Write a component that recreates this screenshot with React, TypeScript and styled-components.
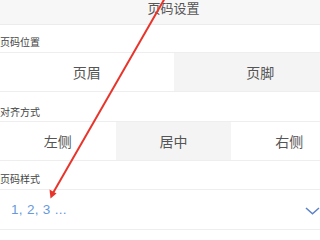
import React from "react";
import styled, { createGlobalStyle } from "styled-components";

const Global = createGlobalStyle`
  html, body { margin: 0; padding: 0; background: #fff; overflow: hidden; }
  body { font-family: "Noto Sans CJK SC", "Noto Sans", sans-serif; }
`;

const Page = styled.div`
  position: relative;
  width: 347px;
  height: 240px;
  background: #fff;
`;

const Header = styled.div`
  height: 25px;
  box-sizing: border-box;
  background: #f7f7f7;
  border-bottom: 1px solid #ececec;
  display: flex;
  justify-content: center;
  align-items: flex-start;
  padding-top: 1px;
  font-size: 13px;
  line-height: 13px;
  color: #555;
`;

const Label = styled.div<{ $h: number; $pb: number }>`
  height: ${(p) => p.$h}px;
  box-sizing: border-box;
  display: flex;
  align-items: flex-end;
  padding-bottom: ${(p) => p.$pb}px;
  font-size: 10px;
  line-height: 11px;
  color: #444;
`;

const OptionRow = styled.div<{ $cols: number }>`
  display: grid;
  grid-template-columns: repeat(${(p) => p.$cols}, 1fr);
  height: 40px;
  box-sizing: border-box;
  border-top: 1px solid #eeeeee;
  border-bottom: 1px solid #eeeeee;
`;

const Option = styled.div<{ $gray?: boolean }>`
  display: flex;
  align-items: center;
  justify-content: center;
  background: ${(p) => (p.$gray ? "#f4f4f4" : "#fff")};
  font-size: 14px;
  color: #555;
`;

const SelectRow = styled.div`
  height: 41px;
  box-sizing: border-box;
  border-top: 1px solid #eeeeee;
  border-bottom: 1px solid #eeeeee;
  display: flex;
  align-items: center;
  justify-content: space-between;
  padding: 0 27px 0 11px;
`;

const SelectValue = styled.span`
  font-family: "Liberation Sans", "Noto Sans", sans-serif;
  font-size: 13.5px;
  color: #6899dc;
  letter-spacing: 0.3px;
`;

const Chevron = styled.svg`
  display: block;
  margin-top: 2px;
`;

const Arrow = styled.svg`
  position: absolute;
  left: 0;
  top: 0;
  pointer-events: none;
`;

export default function App() {
  return (
    <>
      <Global />
      <Page>
        <Header>页码设置</Header>
        <Label $h={27} $pb={5}>页码位置</Label>
        <OptionRow $cols={2}>
          <Option>页眉</Option>
          <Option $gray>页脚</Option>
        </OptionRow>
        <Label $h={29} $pb={4}>对齐方式</Label>
        <OptionRow $cols={3}>
          <Option>左侧</Option>
          <Option $gray>居中</Option>
          <Option>右侧</Option>
        </OptionRow>
        <Label $h={28} $pb={5}>页码样式</Label>
        <SelectRow>
          <SelectValue>1, 2, 3 ...</SelectValue>
          <Chevron width="15" height="8" viewBox="0 0 15 8">
            <path d="M1 1 L7.5 6.8 L14 1" fill="none" stroke="#5b82c8" strokeWidth="1.5" />
          </Chevron>
        </SelectRow>
        <Arrow width="320" height="240" viewBox="0 0 320 240">
          <line x1="165" y1="-2" x2="53" y2="193" stroke="#e8352b" strokeWidth="2" />
          <polygon points="50.5,198.5 49.5,189.5 56.5,193.5" fill="#e8352b" />
        </Arrow>
      </Page>
    </>
  );
}
